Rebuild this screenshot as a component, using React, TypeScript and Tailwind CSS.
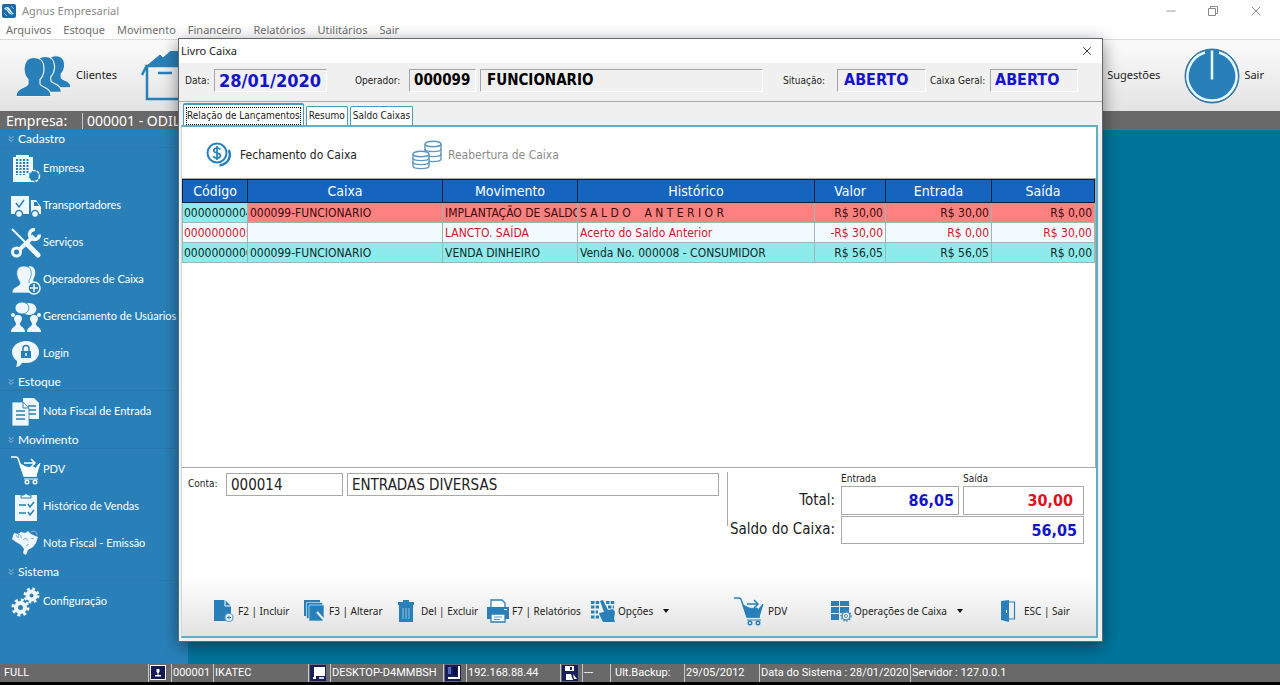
import { useState, type ReactNode } from 'react';
import { ChevronsDown, Minus, X } from 'lucide-react';

type IconProps = { className?: string };

const BLUE = '#2980b9';

const AppLogo = () => (
  <svg viewBox="0 0 14 14" className="w-3.5 h-3.5">
    <rect width="14" height="14" rx="2" fill="#1c6ba6" />
    <path d="M2 5c2-3 5-2 6 0s2 3 4 5c-3 1-5 0-6-2S4 6 2 5z" fill="#dff1fb" />
    <path d="M3 3l8 8" stroke="#5db1e0" strokeWidth="1" />
    <path d="M9 2l3 3M2 9l3 3" stroke="#79c3ea" strokeWidth="1" />
  </svg>
);

const ClientsIcon = () => {
  const person =
    'M18 1c7 0 10 5 10 11 0 4-1 8-4 11v4c0 2 3 3 5 4 4 2 6 4 6 8v1H0v-1c0-4 2-6 7-8 2-1 5-2 5-4v-4C9 20 8 16 8 12 8 6 11 1 18 1z';
  return (
    <svg viewBox="0 0 56 42" className="w-14 h-[42px]">
      <g fill={BLUE} stroke="#f3f3f3" strokeWidth="1.2">
        <path d={person} transform="translate(24 0) scale(.88 .82)" />
        <path d={person} transform="translate(12 0.5) scale(.95 .92)" />
        <path d={person} transform="translate(0 1.5)" />
      </g>
    </svg>
  );
};

const BoxIcon = () => (
  <svg viewBox="0 0 60 50" className="w-[60px] h-[50px]" fill="none" stroke={BLUE} strokeWidth="2.5">
    <path d="M6 15h48v33H6z" />
    <path d="M6 14L1 24M54 14l5 10" />
    <path d="M7 14L19 4l3 3 8-7h6l18 14z" fill={BLUE} strokeWidth="1" />
    <path d="M17 22h14" />
  </svg>
);

const PowerIcon = () => (
  <svg viewBox="0 0 56 56" className="w-14 h-14">
    <circle cx="28" cy="28" r="27" fill={BLUE} stroke="#3a7295" strokeWidth="1" />
    <path d="M21 4.5a24.500 24.500 0 1 0 14 0" fill="none" stroke="#e8f8ff" strokeWidth="2.5" />
    <path d="M28 2.5v29" stroke="#e8f8ff" strokeWidth="2.5" />
  </svg>
);

const BuildingIcon = () => (
  <svg viewBox="0 0 30 30" className="w-[30px] h-[30px]">
    <path d="M2 3h3V1h13v2h4v25H2z" fill="#eef7fd" />
    <g stroke={BLUE} strokeWidth="2" strokeDasharray="2 1">
      <path d="M6 5v16M9.500 5v16M13 5v16M16.500 5v14" />
    </g>
    <circle cx="23" cy="22" r="5.5" fill={BLUE} stroke="#eef7fd" strokeWidth="1.5" strokeDasharray="3 1" />
  </svg>
);

const TruckIcon = () => (
  <svg viewBox="0 0 30 30" className="w-[30px] h-[30px]">
    <path d="M0 5h18v18H0zM20 9h5l5 7v7H20z" fill="#eef7fd" />
    <path d="M5 12l3 4 5-7" fill="none" stroke={BLUE} strokeWidth="1.5" />
    <path d="M23 11h3l2 4h-5z" fill={BLUE} />
    <g fill="#eef7fd" stroke={BLUE} strokeWidth="1.5">
      <circle cx="8" cy="23" r="3.5" />
      <circle cx="24" cy="23" r="3.5" />
    </g>
  </svg>
);

const ToolsIcon = () => (
  <svg viewBox="0 0 30 30" className="w-[30px] h-[30px]" fill="none" stroke="#eef7fd">
    <path d="M1 1l15 15" strokeWidth="2" />
    <path d="M17 17l10 10" strokeWidth="5" strokeLinecap="round" />
    <path d="M8 22L23 8" strokeWidth="4" />
    <circle cx="5.5" cy="24" r="4" strokeWidth="3" />
    <path d="M24 1.5a5 5 0 1 0 4.500 5" strokeWidth="3.5" />
  </svg>
);

const OperatorIcon = () => (
  <svg viewBox="0 0 30 30" className="w-[30px] h-[30px]">
    <path d="M18 1c5 0 7 4 6 9-1 3-2 4-2 7l5 5H14z" fill="#eef7fd" />
    <path d="M13 1c6 0 8 4 7 10-1 3-2 4-2 6 0 4 7 4 7 11H1c0-7 8-6 8-10 0-2-2-3-3-7-1-6 1-10 7-10z" fill="#eef7fd" stroke={BLUE} strokeWidth=".7" />
    <circle cx="23" cy="23" r="6" fill={BLUE} stroke="#eef7fd" strokeWidth="1.5" />
    <path d="M23 19v8M19 23h8" stroke="#eef7fd" strokeWidth="1.5" />
  </svg>
);

const UsersIcon = () => (
  <svg viewBox="0 0 30 30" className="w-[30px] h-[30px]" fill="#eef7fd">
    <ellipse cx="18" cy="7" rx="7.5" ry="6" />
    <ellipse cx="11" cy="6" rx="7" ry="6" stroke={BLUE} strokeWidth=".8" />
    <circle cx="2" cy="13" r="2" />
    <circle cx="28" cy="13" r="2" />
    <path d="M7 13c3 0 4 2 4 4s-2 3-2 5c0 3 5 3 5 8H0c0-5 5-5 5-8 0-2-2-3-2-5s1-4 4-4zM23 13c3 0 4 2 4 4s-2 3-2 5c0 3 5 3 5 8H16c0-5 5-5 5-8 0-2-2-3-2-5s1-4 4-4z" />
  </svg>
);

const LoginIcon = () => (
  <svg viewBox="0 0 30 30" className="w-[30px] h-[30px]">
    <path d="M15 2c8 0 13 5 13 11s-5 11-13 11c-2 0-3 0-4 0-2 3-4 4-6 4 1-2 1-4 1-6-3-2-5-5-5-9C1 7 7 2 15 2z" fill="#eef7fd" />
    <path d="M10 12h10v7H10z" fill={BLUE} />
    <path d="M12 12V9.500a3 3 0 0 1 6 0V12" fill="none" stroke={BLUE} strokeWidth="1.5" />
    <path d="M15 14v3" stroke="#eef7fd" strokeWidth="1.5" />
  </svg>
);

const InvoiceIcon = () => (
  <svg viewBox="0 0 30 30" className="w-[30px] h-[30px]">
    <path d="M12 1h11l5 5v16H12z" fill="#eef7fd" />
    <path d="M17 9h8M17 13h8M17 17h8" stroke={BLUE} strokeWidth="1.5" />
    <path d="M1 5h11l6 6v18H1z" fill="#eef7fd" stroke={BLUE} strokeWidth=".8" />
    <path d="M12 5v6h6" fill="none" stroke={BLUE} strokeWidth="1" />
    <path d="M5 14h9M5 18h9M5 22h9" stroke={BLUE} strokeWidth="1.5" />
  </svg>
);

const CartIcon = ({ className }: IconProps) => (
  <svg viewBox="0 0 30 30" className={className ?? 'w-[30px] h-[30px]'} fill="none" stroke="currentColor">
    <path d="M0 2h5c2 0 2 1 3 4l5 15h13" strokeWidth="1.5" />
    <path d="M9 9l6 3c4 1 6 0 8 0l1 2 5-6-4 13H13z" fill="currentColor" strokeWidth="1" />
    <path d="M13 8h11M20 4l4 4-4 4" strokeWidth="1.5" />
    <path d="M13 24h14" strokeWidth="1" />
    <circle cx="16" cy="27" r="1.8" strokeWidth="1.4" />
    <circle cx="24" cy="27" r="1.8" strokeWidth="1.4" />
  </svg>
);

const ClipboardIcon = () => (
  <svg viewBox="0 0 30 30" className="w-[30px] h-[30px]">
    <path d="M4 3h22v26H4z" fill="#eef7fd" />
    <path d="M10 6V3h3a2.200 2.200 0 0 1 4 0h3v3z" fill="#eef7fd" stroke={BLUE} strokeWidth="1" />
    <path d="M8 13h7M8 21h7" stroke={BLUE} strokeWidth="1.5" />
    <path d="M17 12l2 3 4-5M17 20l2 3 4-5" fill="none" stroke={BLUE} strokeWidth="1.5" />
  </svg>
);

const BrazilIcon = () => (
  <svg viewBox="0 0 30 30" className="w-[30px] h-[30px]">
    <path d="M3 4l4 1 3-2 4 1 3-2 3 3 7 3-2 6-3 4-5 3-2 5-3-2 1-4-3-4-5-3-4-3z" fill="#eef7fd" />
    <path d="M5 6l2 3 1-4 3 4M12 11l3-2 2 3M15 17l3-2M20 9l3 1" fill="none" stroke="#7fb4d8" strokeWidth="1" />
    <path d="M20 3c3-2 6 0 6 3" fill="none" stroke="#8fc1e3" strokeWidth="1" />
  </svg>
);

const GearsIcon = () => (
  <svg viewBox="0 0 30 30" className="w-[30px] h-[30px]" fill="none" stroke="#eef7fd">
    <circle cx="9.5" cy="20.5" r="4.5" strokeWidth="4" />
    <circle cx="9.5" cy="20.5" r="7.5" strokeWidth="3" strokeDasharray="3 2.9" />
    <circle cx="20.5" cy="8.5" r="4" strokeWidth="4" />
    <circle cx="20.5" cy="8.5" r="6.5" strokeWidth="3" strokeDasharray="2.6 2.5" />
  </svg>
);

const CoinsIcon = () => (
  <svg viewBox="0 0 26 26" className="w-[26px] h-[26px]" fill="none" stroke={BLUE}>
    <circle cx="11" cy="11" r="9.5" strokeWidth="2" />
    <path d="M14.500 7.500c-1-1.300-2.200-1.500-3.500-1.500-2 0-3.200 1-3.200 2.500C7.800 12 14.500 10 14.500 13.500c0 1.500-1.500 2.500-3.500 2.500-1.500 0-3-.5-3.800-1.800M11 4v14" strokeWidth="1.7" />
    <path d="M22.500 8c3 5 1 14-9 15.500" strokeWidth="2.5" />
  </svg>
);

const StacksIcon = () => (
  <svg viewBox="0 0 30 30" className="w-[30px] h-[30px]" fill="#fff" stroke="#5d97bd" strokeWidth="1.4">
    <path d="M13 4v15c0 3.500 16 3.500 16 0V4" />
    <path d="M13 14c0 3.500 16 3.500 16 0M13 9c0 3.500 16 3.500 16 0" fill="none" />
    <ellipse cx="21" cy="4" rx="8" ry="2.8" />
    <path d="M1 14v12c0 3.500 16 3.500 16 0V14" />
    <path d="M1 22c0 3.500 16 3.500 16 0M1 18c0 3.500 16 3.500 16 0" fill="none" />
    <ellipse cx="9" cy="14" rx="8" ry="2.8" />
  </svg>
);

const NewFileIcon = () => (
  <svg viewBox="0 0 22 24" className="w-[22px] h-6">
    <path d="M1 1h11l6 6v15H1z" fill={BLUE} />
    <path d="M12 1v6h6" fill="none" stroke="#fff" strokeWidth="1" />
    <circle cx="16" cy="18.5" r="4" fill="#eef4f8" stroke="#5a9cc8" strokeWidth="1.2" />
    <path d="M16 16.500v4M14 18.500h4" stroke={BLUE} strokeWidth="1" />
  </svg>
);

const EditIcon = () => (
  <svg viewBox="0 0 24 24" className="w-6 h-6">
    <path d="M1 1h16v16H1z" fill={BLUE} />
    <path d="M3.500 3.500h16v16h-16z" fill={BLUE} stroke="#d9e8f2" strokeWidth=".7" />
    <path d="M6 6h15v16H6z" fill={BLUE} stroke="#d9e8f2" strokeWidth=".7" />
    <path d="M14 13l8 9" stroke="#e9f3f9" strokeWidth="2" />
  </svg>
);

const TrashIcon = () => (
  <svg viewBox="0 0 18 24" className="w-[18px] h-6">
    <path d="M1 3h5V1h6v2h5v3H1zM2 6h14v17H2z" fill={BLUE} />
    <path d="M6 9v11M9 9v11M12 9v11" stroke="#8fbfde" strokeWidth="1" />
  </svg>
);

const PrinterIcon = () => (
  <svg viewBox="0 0 24 24" className="w-6 h-6">
    <path d="M5 8V1h11l3 3v4" fill="#fff" stroke={BLUE} strokeWidth="1.3" />
    <path d="M1 8h22v12H1z" fill={BLUE} />
    <path d="M5 15h14v8H5z" fill="#fff" stroke={BLUE} strokeWidth="1.3" />
    <path d="M8 18h8M8 20.500h6" stroke="#4b96c6" strokeWidth="1" />
    <path d="M18 10.500h3" stroke="#fff" strokeWidth="1" />
  </svg>
);

const OptionsIcon = () => (
  <svg viewBox="0 0 24 24" className="w-6 h-6">
    <path d="M0 3.500h9M15 3.500h9M0 8h8M17 8h6M0 13h7M0 18h8" stroke={BLUE} strokeWidth="3" strokeDasharray="3.5 1.2" />
    <path d="M9 2l3-1 5 10 5-1 2 3-1 7 1 3H12l-3-6-1-3 5-1z" fill={BLUE} />
  </svg>
);

const GridGearIcon = () => (
  <svg viewBox="0 0 22 22" className="w-[22px] h-[22px]">
    <path d="M1 1h8v5H1zM10 1h9v5h-9zM1 7h8v6H1zM10 7h9v6h-9zM1 14h8v6H1z" fill={BLUE} />
    <circle cx="16" cy="16" r="4" fill="#f4f4f4" stroke="#4b8fbd" strokeWidth="1.5" />
    <circle cx="16" cy="16" r="5" fill="none" stroke="#4b8fbd" strokeWidth="1.5" strokeDasharray="1.5 1.5" />
    <circle cx="16" cy="16" r="1.5" fill="none" stroke="#4b8fbd" />
  </svg>
);

const DoorIcon = () => (
  <svg viewBox="0 0 16 24" className="w-4 h-6">
    <path d="M7 3h7.500v17H7" fill="none" stroke={BLUE} strokeWidth="1.2" />
    <path d="M1 2l8-1v22l-8-2z" fill={BLUE} />
    <path d="M6.500 11v3" stroke="#fff" strokeWidth="1" />
  </svg>
);

const StatusUserIcon = () => (
  <svg viewBox="0 0 16 16" className="w-4 h-4">
    <rect x=".5" y=".5" width="15" height="14" fill="#111a52" stroke="#fff" />
    <path d="M6.500 4h3v3l-1 1v2h2.500v1.500H5V10h2.500V8l-1-1z" fill="#fff" />
  </svg>
);

const StatusHostIcon = () => (
  <svg viewBox="0 0 16 16" className="w-4 h-4">
    <rect width="16" height="16" fill="#17205c" />
    <path d="M4 2h11v9H6v3H3v-2h1z" fill="#fff" />
    <path d="M9 12h5v2H9z" fill="#cfd3ea" />
  </svg>
);

const StatusNetIcon = () => (
  <svg viewBox="0 0 16 16" className="w-4 h-4">
    <rect width="16" height="16" fill="#17205c" />
    <path d="M13 1h2v13H3v-2h10z" fill="#fff" />
    <path d="M3 2h3v7H3z" fill="#5866b8" />
    <path d="M8 2h4v8H8z" fill="#0b1142" />
  </svg>
);

const StatusDiskIcon = () => (
  <svg viewBox="0 0 16 16" className="w-4 h-4">
    <rect width="16" height="16" fill="#17205c" />
    <path d="M3 1h9v5H3zM4 9h5l2 6H4zM11 9l4 5h-3z" fill="#fff" />
    <path d="M8 2h2v3H8z" fill="#17205c" />
  </svg>
);

const menus = ['Arquivos', 'Estoque', 'Movimento', 'Financeiro', 'Relatórios', 'Utilitários', 'Sair'];

const sidebarGroups: { title: string; items: { label: string; icon: ReactNode }[] }[] = [
  {
    title: 'Cadastro',
    items: [
      { label: 'Empresa', icon: <BuildingIcon /> },
      { label: 'Transportadores', icon: <TruckIcon /> },
      { label: 'Serviços', icon: <ToolsIcon /> },
      { label: 'Operadores de Caixa', icon: <OperatorIcon /> },
      { label: 'Gerenciamento de Usúarios', icon: <UsersIcon /> },
      { label: 'Login', icon: <LoginIcon /> },
    ],
  },
  { title: 'Estoque', items: [{ label: 'Nota Fiscal de Entrada', icon: <InvoiceIcon /> }] },
  {
    title: 'Movimento',
    items: [
      { label: 'PDV', icon: <CartIcon /> },
      { label: 'Histórico de Vendas', icon: <ClipboardIcon /> },
      { label: 'Nota Fiscal - Emissão', icon: <BrazilIcon /> },
    ],
  },
  { title: 'Sistema', items: [{ label: 'Configuração', icon: <GearsIcon /> }] },
];

const tabs = ['Relação de Lançamentos', 'Resumo', 'Saldo Caixas'];

const columns = [
  { label: 'Código', width: 'w-[65px]' },
  { label: 'Caixa', width: 'w-[195px]' },
  { label: 'Movimento', width: 'w-[135px]' },
  { label: 'Histórico', width: '' },
  { label: 'Valor', width: 'w-[71px]' },
  { label: 'Entrada', width: 'w-[106px]' },
  { label: 'Saída', width: 'w-[103px]' },
];

const rows = [
  {
    style: 'bg-[#ff8080] text-[#3a0a0a]',
    codeStyle: 'bg-[#8eebeb] text-[#0c2a2a]',
    cells: ['0000000004', '000099-FUNCIONARIO', 'IMPLANTAÇÃO DE SALDO', 'S A L D O    A N T E R I O R', 'R$ 30,00', 'R$ 30,00', 'R$ 0,00'],
  },
  {
    style: 'bg-[#f0faff] text-[#d2142d]',
    codeStyle: '',
    cells: ['0000000005', '', 'LANCTO. SAÍDA', 'Acerto do Saldo Anterior', '-R$ 30,00', 'R$ 0,00', 'R$ 30,00'],
  },
  {
    style: 'bg-[#8eebeb] text-[#0c2a2a]',
    codeStyle: '',
    cells: ['0000000006', '000099-FUNCIONARIO', 'VENDA DINHEIRO', 'Venda No. 000008 - CONSUMIDOR', 'R$ 56,05', 'R$ 56,05', 'R$ 0,00'],
  },
];

const actions = [
  { label: 'F2 | Incluir', icon: <NewFileIcon />, slot: 'w-[25px]', menu: false },
  { label: 'F3 | Alterar', icon: <EditIcon />, slot: 'w-[26px]', menu: false },
  { label: 'Del | Excluir', icon: <TrashIcon />, slot: 'w-6', menu: false },
  { label: 'F7 | Relatórios', icon: <PrinterIcon />, slot: 'w-[26px]', menu: false },
  { label: 'Opções', icon: <OptionsIcon />, slot: 'w-[27px]', menu: true },
  { label: 'PDV', icon: <CartIcon className="w-[30px] h-[30px] text-[#2980b9]" />, slot: 'w-[34px]', menu: false },
  { label: 'Operações de Caixa', icon: <GridGearIcon />, slot: 'w-6', menu: true },
  { label: 'ESC | Sair', icon: <DoorIcon />, slot: 'w-6', menu: false },
];

const statusCells: { content: ReactNode; width: string }[] = [
  { content: 'FULL', width: 'w-[148px] pl-1' },
  { content: <StatusUserIcon />, width: 'w-[23px] border-l pl-px' },
  { content: '000001', width: 'w-[42px] border-l pl-px' },
  { content: 'IKATEC', width: 'w-[95px] border-l pl-px' },
  { content: <StatusHostIcon />, width: 'w-[22px] border-l pl-px' },
  { content: 'DESKTOP-D4MMBSH', width: 'w-[113px] border-l pl-px' },
  { content: <StatusNetIcon />, width: 'w-[23px] border-l pl-px' },
  { content: '192.168.88.44', width: 'w-[94px] border-l pl-px' },
  { content: <StatusDiskIcon />, width: 'w-[22px] border-l pl-px' },
  { content: '---', width: 'w-7 border-l pl-px' },
  { content: 'Ult.Backup:', width: 'w-[74px] border-l pl-1' },
  { content: '29/05/2012', width: 'w-[75px] border-l pl-px' },
  { content: 'Data do Sistema : 28/01/2020', width: 'w-[151px] border-l pl-px' },
  { content: 'Servidor : 127.0.0.1', width: 'flex-1 border-l pl-px' },
];

const insetField =
  "h-[23px] min-w-0 border border-t-[#a5a5a5] border-l-[#a5a5a5] border-b-white border-r-white bg-[#f0f0f0] font-['DejaVu_Sans_Condensed','DejaVu_Sans',sans-serif] font-bold outline-none";
const boxField =
  "min-w-0 border border-[#a9a9a9] bg-white font-['DejaVu_Sans_Condensed','DejaVu_Sans',sans-serif] outline-none";

const Caret = () => (
  <svg viewBox="0 0 6 4" className="w-1.5 h-1 ml-2.5">
    <path d="M0 0h6L3 4z" fill="#111" />
  </svg>
);

const Sidebar = () => (
  <nav className="w-[188px] shrink-0 bg-[#2980b9] font-['Lato','Noto_Sans',sans-serif] text-[11px] text-white">
    {sidebarGroups.map((group) => (
      <section key={group.title}>
        <h2 className="h-[18px] flex items-center gap-0.5 pl-1.5 border-b border-[#2677ae] text-[12px]">
          <ChevronsDown className="w-2.5 h-3 text-[#b5c9d6]" />
          {group.title}
        </h2>
        <ul className="pt-0.5 pb-px">
          {group.items.map((item) => (
            <li key={item.label}>
              <button className="h-[37px] w-full flex items-center gap-0.5 pl-[11px] whitespace-nowrap">
                {item.icon}
                {item.label}
              </button>
            </li>
          ))}
        </ul>
      </section>
    ))}
  </nav>
);

const EntriesTable = () => (
  <table className="w-full table-fixed border-collapse font-['DejaVu_Sans_Condensed','DejaVu_Sans',sans-serif] text-[12px]">
    <thead>
      <tr className="h-[23px] bg-[#1565c0] text-white text-[14px]">
        {columns.map((col) => (
          <th key={col.label} className={`${col.width} border border-[#0b1f3a] p-0 font-normal leading-5`}>
            {col.label}
          </th>
        ))}
      </tr>
    </thead>
    <tbody>
      {rows.map((row) => (
        <tr key={row.cells[0]} className={`h-5 ${row.style}`}>
          {row.cells.map((cell, i) => (
            <td
              key={i}
              className={`border border-[#a0b4b4] py-0 leading-[18px] whitespace-pre overflow-hidden ${i > 3 ? 'text-right' : ''} ${
                i === 0 ? `pl-px pr-0 ${row.codeStyle}` : 'px-0.5'
              }`}
            >
              {cell}
            </td>
          ))}
        </tr>
      ))}
    </tbody>
  </table>
);

const CashBook = () => {
  const [tab, setTab] = useState(0);

  return (
    <div
      role="dialog"
      aria-label="Livro Caixa"
      className="absolute top-[38px] bottom-[43px] left-[178px] right-[177px] flex flex-col bg-[#f0f0f0] border border-[#5c6b73] shadow-[0_4px_16px_rgba(0,0,0,0.45)] text-[#222]"
    >
      <div className="h-6 shrink-0 flex items-center justify-between bg-white pl-0.5 pr-2 text-[11px]">
        Livro Caixa
        <button aria-label="Fechar">
          <X className="w-3.5 h-3.5" strokeWidth={1.5} />
        </button>
      </div>

      <div className="h-[39px] shrink-0 flex items-center pb-1 pl-1.5 pr-6 border-b border-[#a8a8a8] font-['DejaVu_Sans_Condensed','DejaVu_Sans',sans-serif] text-[10px] whitespace-nowrap">
        <label htmlFor="data" className="w-[29px]">Data:</label>
        <input id="data" readOnly value="28/01/2020" className={`${insetField} w-[113px] px-1 text-[#1414c8] text-[18px]`} />
        <label htmlFor="operador" className="ml-7 w-[54px]">Operador:</label>
        <input id="operador" readOnly value="000099" className={`${insetField} w-[67px] pl-1 text-black text-[15px]`} />
        <input aria-label="Nome do operador" readOnly value="FUNCIONARIO" className={`${insetField} ml-1 flex-1 px-1.5 text-black text-[15px]`} />
        <label htmlFor="situacao" className="ml-5 w-[54px]">Situação:</label>
        <input id="situacao" readOnly value="ABERTO" className={`${insetField} w-[89px] px-1.5 text-[#1414c8] text-[16px]`} />
        <label htmlFor="geral" className="ml-1 w-[60px]">Caixa Geral:</label>
        <input id="geral" readOnly value="ABERTO" className={`${insetField} w-[88px] px-1 text-[#1414c8] text-[16px]`} />
      </div>

      <div role="tablist" className="h-[23px] shrink-0 flex items-end gap-0.5 pl-1 font-['DejaVu_Sans_Condensed','DejaVu_Sans',sans-serif] text-[10px]">
        {tabs.map((name, i) => (
          <button
            key={name}
            role="tab"
            aria-selected={tab === i}
            onClick={() => setTab(i)}
            className={`border border-b-0 border-[#4a9ab8] rounded-t-xs bg-white whitespace-nowrap ${
              tab === i ? 'h-[22px] border-t-2 p-0.5' : 'h-[19px] px-0.5'
            }`}
          >
            <span className={tab === i ? 'block border border-dotted border-black leading-4' : 'block leading-4'}>{name}</span>
          </button>
        ))}
      </div>

      <div className="flex-1 min-h-0 flex flex-col ml-0.5 mr-1 mb-[3px] border-2 border-[#5fb0c0] border-l-[#bcdde6] border-l bg-white">
        <div className="h-[51px] shrink-0 flex items-center pt-1 pl-6 font-['DejaVu_Sans_Condensed','DejaVu_Sans',sans-serif] text-[12px]">
          <button className="w-[206px] flex items-center gap-2 text-left">
            <CoinsIcon />
            Fechamento do Caixa
          </button>
          <button disabled className="flex items-center gap-1.5 text-[#8c8c8c]">
            <StacksIcon />
            Reabertura de Caixa
          </button>
        </div>

        <div className="flex-1 min-h-0 border-y border-r border-[#a9a9a9] bg-white">
          <EntriesTable />
        </div>

        <div className="h-[77px] shrink-0 flex items-start pt-1 pl-1.5 pr-3 font-['DejaVu_Sans_Condensed','DejaVu_Sans',sans-serif] text-[10px]">
          <label htmlFor="conta" className="w-[38px] pt-1">Conta:</label>
          <input id="conta" readOnly value="000014" className={`${boxField} mt-px h-[23px] w-[117px] px-1 text-[15px]`} />
          <input aria-label="Nome da conta" readOnly value="ENTRADAS DIVERSAS" className={`${boxField} mt-px ml-1 h-[23px] flex-1 px-1 text-[15px]`} />
          <div className="ml-2 flex items-start border-l border-[#a9a9a9] h-[54px]">
            <div className="grid grid-cols-[109px_118px_121px] gap-x-1 items-center">
              <span />
              <label htmlFor="entrada" className="h-3.5 leading-3.5">Entrada</label>
              <label htmlFor="saida" className="h-3.5 leading-3.5">Saída</label>
              <span className="text-right text-[15px] pr-0.5">Total:</span>
              <input id="entrada" readOnly value="86,05" className={`${boxField} h-[29px] pr-1 text-right text-[16px] font-bold text-[#1414c8]`} />
              <input id="saida" readOnly value="30,00" className={`${boxField} h-[29px] pr-2.5 text-right text-[16px] font-bold text-[#e01020]`} />
              <label htmlFor="saldo" className="text-right text-[15px] whitespace-nowrap pr-0.5">Saldo do Caixa:</label>
              <input id="saldo" readOnly value="56,05" className={`${boxField} col-span-2 mt-px h-7 pr-1.5 text-right text-[16px] font-bold text-[#1414c8]`} />
            </div>
          </div>
        </div>

        <div className="h-[91px] shrink-0 grid grid-cols-[90px_94px_89px_105px_143px_96px_170px_1fr] items-end pb-2 pl-[31px] bg-linear-to-b from-white from-35% to-[#e2e2e2] text-[10px]">
          {actions.map((action) => (
            <button key={action.label} className="h-[34px] flex items-center whitespace-nowrap">
              <span className={`${action.slot} shrink-0`}>{action.icon}</span>
              {action.label}
              {action.menu && <Caret />}
            </button>
          ))}
        </div>
      </div>
    </div>
  );
};

export default function App() {
  return (
    <div className="relative min-h-screen flex flex-col overflow-hidden bg-black font-['Noto_Sans',sans-serif] text-[11px]">
      <header className="h-[22px] flex items-center justify-between bg-white pl-0.5 pr-4 text-[#8a8a8a]">
        <div className="flex items-center gap-1.5">
          <AppLogo />
          <h1>Agnus Empresarial</h1>
        </div>
        <div className="flex items-center gap-7">
          <button aria-label="Minimizar"><Minus className="w-3.5 h-3.5" strokeWidth={1.5} /></button>
          <button aria-label="Restaurar">
            <svg viewBox="0 0 14 14" className="w-3.5 h-3.5" fill="none" stroke="currentColor">
              <path d="M2.500 4.500h7v7h-7zM4.500 4.500v-2h7v7h-2" />
            </svg>
          </button>
          <button aria-label="Fechar aplicativo"><X className="w-4 h-4" strokeWidth={1.5} /></button>
        </div>
      </header>

      <nav className="h-[17px] flex items-center gap-3 bg-white pl-1.5 text-[#6e6e6e]">
        {menus.map((menu) => (
          <button key={menu}>{menu}</button>
        ))}
      </nav>

      <div className="h-[72px] flex items-center justify-between border-t border-[#dcdcdc] bg-linear-to-b from-[#fbfbfb] to-[#e3e3e3] pl-4 pr-4 text-[#222]">
        <div className="flex items-center">
          <button className="flex items-center gap-1">
            <ClientsIcon />
            Clientes
          </button>
          <button aria-label="Produtos" className="ml-6"><BoxIcon /></button>
        </div>
        <div className="flex items-center">
          <button>Sugestões</button>
          <button className="ml-6 flex items-center gap-1">
            <PowerIcon />
            Sair
          </button>
        </div>
      </div>

      <div className="h-[19px] flex items-center bg-[#696969] pl-1.5 text-[14px] leading-4 text-white">
        <span className="w-[76px]">Empresa:</span>
        <span className="border-l border-[#c8c8c8] pl-1">000001 - ODIL</span>
      </div>

      <main className="flex-1 flex bg-[#00759c]">
        <Sidebar />
      </main>

      <footer className="h-[18px] mb-[3px] flex bg-[#696969] font-['Roboto','Noto_Sans',sans-serif] text-white whitespace-nowrap">
        {statusCells.map((cell, i) => (
          <div key={i} className={`${cell.width} flex items-center border-[#c8c8c8]`}>{cell.content}</div>
        ))}
      </footer>

      <CashBook />
    </div>
  );
}
